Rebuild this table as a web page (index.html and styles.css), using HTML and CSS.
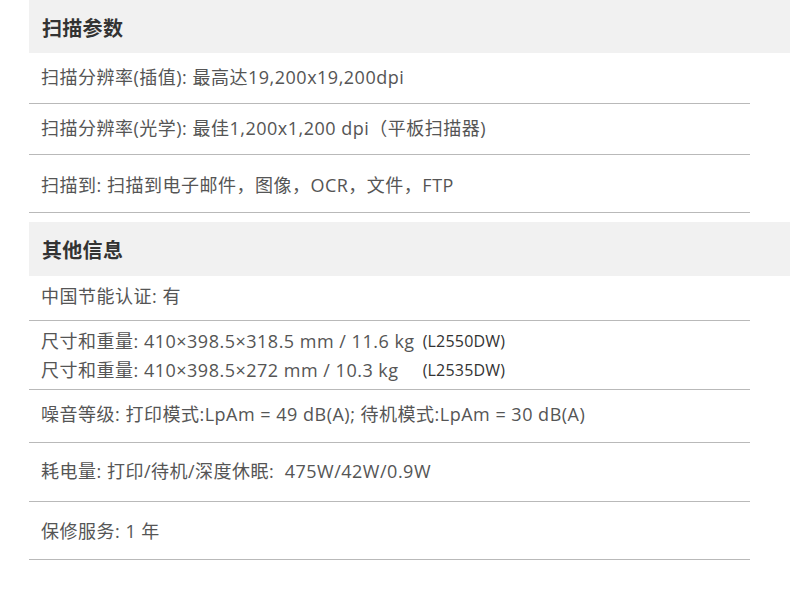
FILE: index.html
```html
<!DOCTYPE html>
<html lang="zh-CN">
<head>
<meta charset="utf-8">
<title>规格参数</title>
<link rel="stylesheet" href="styles.css">
</head>
<body>
<div class="specs">
  <section class="group">
    <h2 class="group-title">扫描参数</h2>
    <div class="row r-a">扫描分辨率(插值): 最高达19,200x19,200dpi</div>
    <div class="row r-a">扫描分辨率(光学): 最佳1,200x1,200 dpi（平板扫描器)</div>
    <div class="row r-b">扫描到: 扫描到电子邮件，图像，OCR，文件，FTP</div>
  </section>
  <section class="group">
    <h2 class="group-title">其他信息</h2>
    <div class="row r-c">中国节能认证: 有</div>
    <div class="row r-d">
      <div class="dims">
        <span>尺寸和重量: 410×398.5×318.5 mm / 11.6 kg</span><span class="model">(L2550DW)</span>
        <span>尺寸和重量: 410×398.5×272 mm / 10.3 kg</span><span class="model">(L2535DW)</span>
      </div>
    </div>
    <div class="row r-e">噪音等级: 打印模式:LpAm = 49 dB(A); 待机模式:LpAm = 30 dB(A)</div>
    <div class="row r-f">耗电量: 打印/待机/深度休眠:&nbsp;&nbsp;475W/42W/0.9W</div>
    <div class="row r-g">保修服务: 1 年</div>
  </section>
</div>
</body>
</html>
```

FILE: styles.css
```css
html, body {
  margin: 0;
  padding: 0;
  background: #ffffff;
}
body {
  font-family: "Open Sans", "Noto Sans CJK SC", sans-serif;
  color: #555555;
  overflow: hidden;
}
.specs {
  margin-left: 29px;
}
.group + .group {
  margin-top: 9px;
}
.group-title {
  margin: 0;
  background: #f1f1f1;
  color: #333333;
  font-size: 20px;
  font-weight: 700;
  height: 53px;
  line-height: 56px;
  padding-left: 13px;
  letter-spacing: 0.3px;
  font-family: "Noto Sans CJK SC", sans-serif;
}
.group + .group .group-title {
  height: 54px;
}
.row {
  width: 721px;
  box-sizing: border-box;
  border-bottom: 1px solid #b9b9b9;
  padding-left: 12px;
  font-size: 18px;
  letter-spacing: 0.5px;
  line-height: 28px;
}
.r-a { padding-top: 10px; padding-bottom: 12px; }
.r-b { padding-top: 16px; padding-bottom: 13px; }
.r-c { padding-top: 6px; padding-bottom: 10px; }
.r-d { padding-top: 6px; padding-bottom: 4px; line-height: 29px; }
.r-e { padding-top: 10px; padding-bottom: 14px; }
.r-f { padding-top: 14px; padding-bottom: 16px; }
.r-g { padding-top: 15px; padding-bottom: 14px; }
.dims {
  display: grid;
  grid-template-columns: auto auto;
  justify-content: start;
  column-gap: 8px;
}
.model {
  font-size: 16px;
  letter-spacing: 0.2px;
  color: #333333;
}
```
